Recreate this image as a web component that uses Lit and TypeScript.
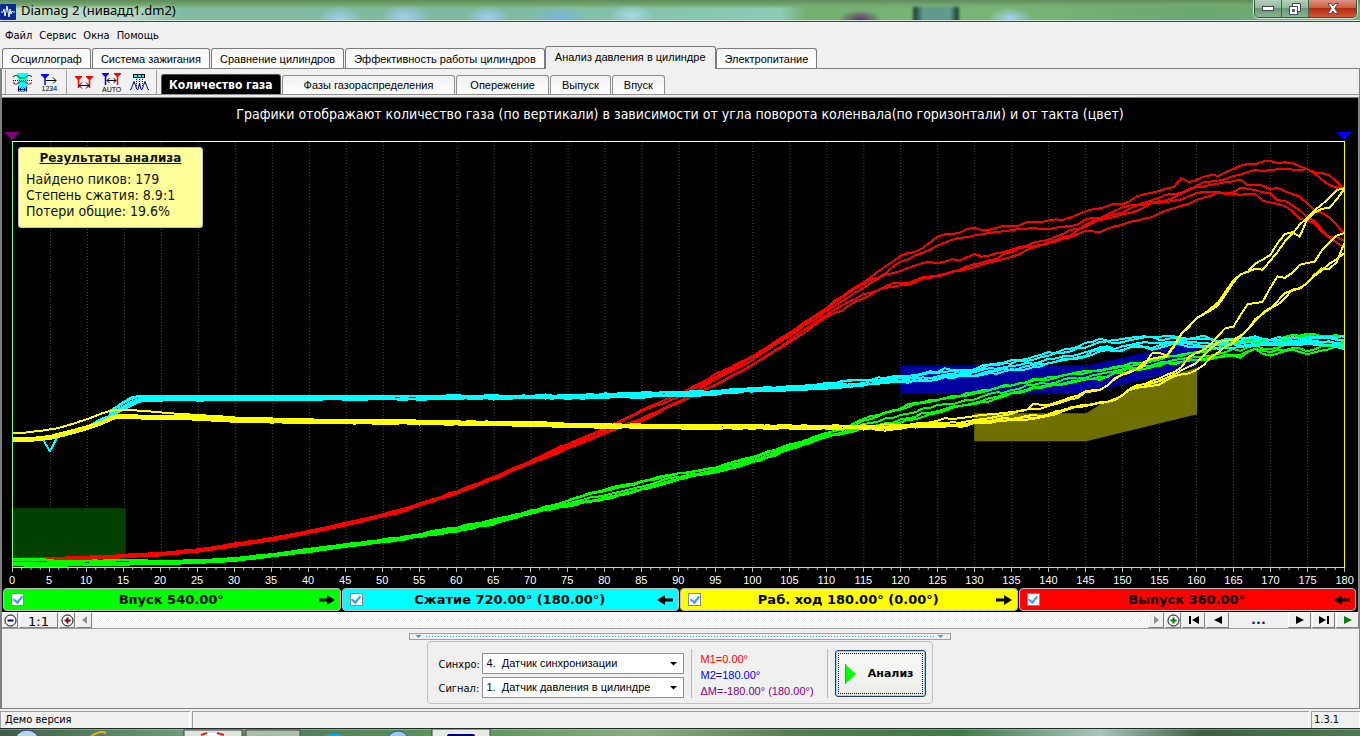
import { LitElement, html, svg, css } from "lit";
import { customElement, state } from "lit/decorators.js";
import { classMap } from "lit/directives/class-map.js";

type Pt = [number, number];

const DEG = 7.4;
const LEFT = 12;

function at(points: Pt[], x: number): number {
  if (x <= points[0][0]) return points[0][1];
  for (let i = 1; i < points.length; i++) {
    const [x1, y1] = points[i];
    if (x <= x1) {
      const [x0, y0] = points[i - 1];
      return y0 + ((y1 - y0) * (x - x0)) / (x1 - x0);
    }
  }
  return points[points.length - 1][1];
}

// Repeatable measurement ripple, so every render draws the same trace.
function ripple(seed: number, i: number): number {
  const v = Math.sin(seed * 91.7 + i * 37.3) * 4375.5;
  return (v - Math.floor(v)) * 2 - 1;
}

function trace(f: (x: number) => number, seed: number, amp: number, from = 0): string {
  const out: string[] = [];
  for (let d = from; d <= 180; d++) {
    const x = LEFT + d * DEG;
    const a = d < 50 ? amp * 0.25 : d < 110 ? amp * 0.6 : amp;
    out.push(`${x.toFixed(1)},${(f(x) + ripple(seed, d) * a).toFixed(1)}`);
  }
  return out.join(" ");
}

const mix = (lo: Pt[], hi: Pt[], t: number) => (x: number) => at(lo, x) * (1 - t) + at(hi, x) * t;

// Constant separation of neighbouring cycles on the calm part of the stroke.
const spread = (p: Pt[], offset: number, until: number) => (x: number) => at(p, x) + (x < until ? offset : 0);

const redBase: Pt[] = [[12, 561], [50, 560], [83, 559], [117, 557.5], [160, 555], [197, 551.5], [233, 546], [272, 540], [308, 533], [345, 525], [382, 516.5], [400, 512], [419, 505.5], [457, 493], [493, 479], [530, 463]];

const red: Pt[][] = [
  [...redBase, [567, 445], [604, 429], [641, 411], [678, 395], [715, 375], [753, 356], [789, 333], [826, 308], [840, 297], [863, 283], [883, 269], [900, 257], [921, 249], [937, 236], [957, 233], [974, 228], [985, 231], [1000, 227], [1005, 225], [1013, 227], [1028, 222], [1042, 223], [1050, 221], [1072, 218], [1085, 211], [1100, 209], [1115, 204], [1123, 205], [1140, 195], [1153, 192], [1173, 188], [1182, 178], [1190, 182], [1207, 175], [1218, 175], [1230, 170], [1240, 166], [1255, 164], [1262, 162], [1280, 162], [1295, 163], [1307, 170], [1318, 176], [1330, 186], [1344, 189]],
  [...redBase, [567, 446], [604, 430], [641, 412], [678, 398], [715, 378], [753, 357], [789, 335], [826, 309], [863, 284], [883, 275], [900, 262], [921, 253], [937, 246], [957, 239], [974, 236], [993, 232], [1023, 229], [1040, 229], [1073, 227], [1083, 221], [1093, 217], [1100, 219], [1113, 211], [1130, 206], [1147, 203], [1160, 197], [1183, 192], [1200, 183], [1233, 177], [1255, 170], [1265, 172], [1283, 168], [1307, 170], [1328, 175], [1344, 188]],
  [...redBase, [567, 447], [604, 433], [641, 419], [678, 402], [715, 380], [753, 360], [789, 336], [826, 312], [863, 289], [883, 275], [900, 271], [915, 265], [930, 262], [937, 264], [952, 259], [960, 262], [974, 254], [982, 258], [1000, 253], [1020, 247], [1050, 240], [1070, 231], [1087, 226], [1100, 219], [1123, 212], [1137, 206], [1157, 203], [1180, 195], [1197, 187], [1213, 185], [1240, 180], [1248, 185], [1263, 185], [1272, 190], [1278, 188], [1292, 195], [1300, 196], [1315, 212], [1322, 212], [1337, 225], [1344, 233]],
  [...redBase, [567, 449], [604, 434], [641, 421], [678, 402], [715, 385], [753, 365], [789, 341], [826, 315], [863, 295], [880, 289], [893, 284], [907, 284], [921, 278], [937, 276], [957, 270], [974, 265], [993, 260], [1020, 248], [1043, 244], [1070, 235], [1090, 222], [1113, 218], [1133, 212], [1153, 203], [1177, 200], [1197, 193], [1218, 191], [1227, 195], [1240, 188], [1253, 190], [1270, 193], [1277, 200], [1287, 200], [1307, 218], [1315, 221], [1330, 238], [1344, 248]],
  [...redBase, [567, 449], [604, 434], [641, 422], [678, 403], [715, 386], [753, 365], [789, 343], [826, 317], [845, 309], [863, 298], [880, 290], [900, 285], [907, 285], [921, 280], [937, 276], [957, 271], [974, 267], [1000, 260], [1007, 259], [1033, 248], [1050, 243], [1070, 237], [1083, 232], [1100, 232], [1123, 225], [1133, 220], [1143, 220], [1160, 213], [1183, 205], [1200, 200], [1218, 193], [1233, 194], [1257, 195], [1263, 202], [1277, 203], [1290, 209], [1302, 220], [1312, 220], [1325, 237], [1337, 238], [1344, 242]],
];

const greenHi: Pt[] = [[12, 560], [40, 560], [60, 562], [120, 561], [167, 562], [200, 561], [233, 559], [272, 555], [308, 550], [345, 545], [382, 541], [419, 535], [457, 528], [493, 521], [530, 512], [567, 501], [604, 490], [641, 482], [678, 474], [715, 468], [753, 457], [789, 446], [826, 434], [850, 427], [863, 420], [880, 415], [900, 408], [921, 402], [937, 399], [957, 397], [974, 392], [993, 389], [1011, 385], [1030, 381], [1043, 380], [1063, 375], [1083, 373], [1103, 370], [1123, 366], [1143, 363], [1163, 358], [1183, 355], [1200, 351], [1213, 350], [1233, 343], [1253, 341], [1273, 341], [1293, 336], [1307, 334], [1320, 337], [1344, 336]];
const greenLo: Pt[] = [[12, 566], [50, 567], [120, 566], [167, 565], [200, 564], [233, 562], [272, 557], [308, 553], [345, 548], [382, 543], [419, 538], [457, 532], [493, 525], [530, 514], [567, 507], [604, 500], [641, 491], [678, 480], [715, 473], [753, 463], [789, 451], [826, 437], [850, 433], [863, 429], [880, 427], [900, 423], [921, 417], [937, 413], [957, 408], [974, 405], [993, 400], [1011, 394], [1043, 387], [1063, 386], [1083, 381], [1103, 379], [1123, 372], [1143, 370], [1163, 365], [1183, 363], [1200, 361], [1213, 358], [1233, 357], [1240, 358], [1253, 349], [1267, 357], [1280, 353], [1293, 351], [1307, 354], [1320, 350], [1344, 347]];

const cyanHi: Pt[] = [[12, 438], [38, 437], [60, 430], [100, 415], [110, 411], [123, 402], [130, 398], [138, 396.5], [250, 396.5], [400, 396.5], [567, 395.5], [678, 392.5], [715, 391.5], [753, 389], [789, 387], [826, 384], [847, 381], [880, 379], [900, 377], [921, 375], [943, 370], [963, 371], [974, 369], [983, 365], [1004, 362], [1030, 359], [1050, 353], [1067, 350], [1083, 345], [1100, 340], [1117, 342], [1137, 337], [1150, 336], [1177, 338], [1187, 339], [1200, 336], [1217, 341], [1250, 337], [1267, 340], [1293, 337], [1307, 338], [1344, 337]];
const cyanLo: Pt[] = [[12, 440], [38, 438], [42, 440], [49, 452], [56, 438], [66, 436], [80, 430], [100, 420], [115, 414], [140, 401.5], [175, 401], [250, 400.5], [400, 400], [567, 399], [641, 398], [678, 396], [715, 395], [753, 392], [789, 391], [826, 389], [847, 387], [880, 384], [900, 383], [921, 382], [943, 379], [974, 376], [1004, 372], [1030, 368], [1050, 364], [1067, 361], [1083, 358], [1100, 351], [1117, 353], [1137, 346], [1150, 350], [1177, 344], [1187, 346], [1200, 347], [1217, 348], [1250, 346], [1267, 345], [1293, 344], [1307, 344], [1344, 348]];

const yellowTop: Pt[] = [[12, 434], [27, 433], [57, 429], [80, 422], [107, 412], [120, 410], [160, 413], [200, 416], [233, 418], [300, 420], [400, 421], [530, 423], [604, 425], [760, 426], [860, 427], [893, 425], [921, 425], [943, 420], [974, 417], [1000, 413], [1027, 411], [1033, 405], [1050, 406], [1072, 397], [1087, 392], [1100, 390], [1117, 378]];
const yellowBot: Pt[] = [[12, 440], [30, 440], [50, 438], [70, 433], [100, 424], [113, 417], [160, 418], [200, 419], [233, 421], [300, 422], [400, 423], [530, 425], [604, 427], [700, 428], [800, 428], [860, 428], [893, 429], [921, 426], [963, 425], [974, 423], [993, 422], [1000, 420], [1027, 418], [1050, 415], [1072, 408], [1087, 406], [1100, 403], [1117, 400], [1133, 388]];

const yellow: Pt[][] = [
  [...yellowTop, [1133, 370], [1143, 368], [1152, 353], [1163, 352], [1168, 357], [1177, 340], [1192, 322], [1200, 317], [1217, 305], [1225, 292], [1235, 277], [1247, 273], [1257, 262], [1267, 259], [1283, 235], [1293, 233], [1300, 237], [1308, 218], [1320, 208], [1330, 208], [1344, 190]],
  [...yellowBot.slice(0, 20), [1050, 408], [1072, 400], [1087, 393], [1100, 390], [1117, 378], [1133, 371], [1148, 361], [1167, 357], [1182, 333], [1197, 318], [1218, 306], [1233, 283], [1242, 272], [1263, 269], [1280, 248], [1303, 221], [1315, 210], [1337, 190], [1344, 188]],
  [...yellowBot, [1163, 378], [1177, 372], [1190, 357], [1203, 351], [1227, 328], [1233, 327], [1248, 304], [1263, 302], [1277, 277], [1287, 277], [1302, 263], [1315, 262], [1323, 248], [1338, 235], [1344, 234]],
  [...yellowBot, [1140, 388], [1163, 380], [1177, 373], [1197, 363], [1217, 343], [1233, 341], [1247, 330], [1257, 317], [1273, 307], [1283, 295], [1302, 288], [1322, 270], [1344, 253]],
  [...yellowBot, [1140, 388], [1155, 387], [1173, 377], [1197, 371], [1220, 350], [1243, 337], [1263, 313], [1283, 302], [1293, 290], [1302, 287], [1323, 268], [1330, 270], [1340, 257], [1344, 243]],
];

const TRACES = [
  ...red.map((p, i) => ({ cls: "red", pts: trace(spread(p, (i - 2) * 0.6, 560), i + 1, 1) })),
  ...[0, 0.12, 0.55, 0.85, 1].map((t, i) => ({ cls: "lime", pts: trace(mix(greenHi, greenLo, t), i + 11, 1.4) })),
  ...[0, 0.2, 0.6, 0.85, 1].map((t, i) => ({ cls: "aqua", pts: trace(mix(cyanHi, cyanLo, t), i + 21, 1.4, i === 4 ? 3 : 13) })),
  { cls: "yellow", pts: trace((x) => at(yellow[0], x), 31, 1) },
  ...yellow.slice(1).map((p, i) => ({ cls: "yellow", pts: trace(spread(p, i - 1.5, 1060), i + 32, 1.2) })),
];

const MAIN_TABS = ["Осциллограф", "Система зажигания", "Сравнение цилиндров", "Эффективность работы цилиндров", "Анализ давления в цилиндре", "Электропитание"];
const SUB_TABS = ["Количество газа", "Фазы газораспределения", "Опережение", "Выпуск", "Впуск"];
const PHASES = [
  { name: "Впуск 540.00°", cls: "p-lime", back: false },
  { name: "Сжатие 720.00° (180.00°)", cls: "p-aqua", back: true },
  { name: "Раб. ход 180.00° (0.00°)", cls: "p-yellow", back: false },
  { name: "Выпуск 360.00°", cls: "p-red", back: true },
];

const icoRange = html`<svg width="20" height="20" viewBox="0 0 20 20">
  <path d="M5 1h11l-1 4v15H6V5z" fill="#0ff"/>
  <path d="M1 5l2-1.500h2L8 6h5l3-2.500h2L20 5" fill="none" stroke="green" stroke-width="1.200"/>
  <path d="M1 8.500h19" stroke="#000" stroke-dasharray="1 1"/>
  <path d="M1 10.500L3 12h2l3-2.500h5L16 12h2l2-1.500" fill="none" stroke="red" stroke-width="1.200"/>
  <path d="M6.500 14.500v5M14.500 14.500v5M7 17.500h7M9.500 15.500l-2 2 2 2M11.500 15.500l2 2-2 2" fill="none" stroke="#000080"/></svg>`;
const icoCount = html`<svg width="20" height="20" viewBox="0 0 20 20">
  <path d="M1 2h8v1L6 6H4L1 3z" fill="#00f"/><path d="M5 5v8" stroke="#00f" stroke-width="1.500"/>
  <path d="M6 8.500h10M13 5.500l3 3-3 3" fill="none" stroke="#000"/>
  <text class="tiny" x="1.500" y="19">1234</text></svg>`;
const icoMarks = html`<svg width="20" height="20" viewBox="0 0 20 20">
  <path d="M1 4h7v1L5.500 7.500h-2L1 5zM12 4h7v1l-2.500 2.500h-2L12 5z" fill="red"/><path d="M4.500 7v9M15.500 7v9" stroke="red" stroke-width="1.500"/>
  <path d="M5 13.500h10M8 10.500l-3 3 3 3M12 10.500l3 3-3 3" fill="none" stroke="#000"/></svg>`;
const icoAuto = html`<svg width="20" height="20" viewBox="0 0 20 20">
  <path d="M0 1h7v1L4.500 4.500h-2L0 2z" fill="#00f"/><path d="M3.500 4v9" stroke="#00f" stroke-width="1.500"/>
  <path d="M12 1h7v1l-2.500 2.500h-2L12 2z" fill="red"/><path d="M15.500 4v9" stroke="red" stroke-width="1.500"/>
  <path d="M5 8.500h9M7.500 6l-2.500 2.500L7.500 11M11.500 6L14 8.500 11.500 11" fill="none" stroke="#000"/>
  <text class="tiny" x="0" y="20">AUTO</text></svg>`;
const icoPeaks = html`<svg width="20" height="20" viewBox="0 0 20 20">
  <path d="M3 2h12v4H3z"/><path d="M4 3h3v2H4zM8 3h3v2H8zM12 3h2v2h-2z" fill="#0ff"/>
  <path d="M6.500 7v7M9.500 7v7M12.500 7v7" stroke="#000" stroke-dasharray="1 1"/>
  <path d="M0 17.500h1l1.500-4 1.500-4 1.500 4 1.500 4h1l1.500-6 1.500 6h1l1.500-4 1.500-4 1.500 4 1.500 4h1" fill="none" stroke="#000080"/></svg>`;
const arrow = (back: boolean) => html`<svg class=${classMap({ arrow: true, back })} width="16" height="10" viewBox="0 0 16 10"><path d="M0 3.500h8V0l8 5-8 5V6.500H0z"/></svg>`;

@customElement("app-root")
export class AppRoot extends LitElement {
  @state() private tab = 4;
  @state() private sub = 0;

  static styles = css`
    :host { display: flex; flex-direction: column; height: 100vh; min-height: 480px; overflow: hidden; background: #f0f0f0; color: #000; font: 11px/16px "Liberation Sans", Arial, sans-serif; }
    * { box-sizing: border-box; }
    button, input, select { font: inherit; color: inherit; margin: 0; padding: 0; border-radius: 0; }
    svg { display: block; flex: none; }
    .tiny { font: 7px "Liberation Sans", Arial, sans-serif; fill: #000; }
    .title { display: flex; height: 22px; flex: none; align-items: flex-start; border-bottom: 1px solid #3b4a48; box-shadow: inset 0 -1px #d5e6dc; padding-right: 3px;
      background:
        linear-gradient(#0003, transparent 6px),
        radial-gradient(ellipse 22px 14px at 340px 20px, #9fcdf0, transparent),
        radial-gradient(ellipse 24px 14px at 405px 18px, #9fcdf0, transparent),
        radial-gradient(ellipse 22px 12px at 488px 18px, #9fcdf0, transparent),
        radial-gradient(ellipse 28px 10px at 560px 18px, #74b4e0, transparent),
        radial-gradient(ellipse 22px 12px at 632px 16px, #a8d8e4, transparent),
        radial-gradient(ellipse 22px 10px at 860px 20px, #5d2f6c, transparent),
        linear-gradient(#76ae72 5px, transparent 9px),
        linear-gradient(90deg, transparent 911px, #28463c 915px, #5f9a8c 923px, #5f9a8c 950px, #28463c 957px, transparent 961px),
        radial-gradient(ellipse 22px 10px at 1010px 18px, #a4d0f4, transparent),
        linear-gradient(90deg, #c3dccb 0, #b9d8c6 130px, #82bba0 180px, #7fb9a4 500px, #8accb8 780px, #76ae72 805px, #7ab577 1010px, #68a672 1200px, #7ab078); }
    .title h1 { flex: 1; margin: 2px 0 0 5px; font: 13px/17px "Noto Sans", "Open Sans", sans-serif; }
    .title .logo { margin-top: 4px; }
    .caps { display: flex; height: 18px; border: 1px solid #355240; border-top: 0; border-radius: 0 0 5px 5px; box-shadow: 0 0 0 1px #cfe5d3; overflow: hidden; }
    .caps button { width: 27px; border: 0; border-right: 1px solid #456353; background: linear-gradient(#b4d2b8, #8fb998 45%, #6a9a77 50%, #86b48e); display: grid; place-items: center; }
    .caps .close { width: 47px; border: 0; background: linear-gradient(#dd9685, #cf5c43 45%, #b52b10 50%, #d2573a); }
    .menu { display: flex; gap: 7px; padding: 4px 5px 0; height: 24px; flex: none; font: 11px/16px "DejaVu Sans Condensed", "DejaVu Sans", sans-serif; }
    .menu button { border: 0; background: none; }
    .tabs { display: flex; gap: 1px; align-items: flex-end; padding-left: 2px; flex: none; height: 22px; }
    .tabs button { height: 20px; padding: 0 8px; white-space: nowrap; border: 1px solid #7a7a7a; border-bottom: 0; border-radius: 3px 3px 0 0; background: linear-gradient(#f4f4f4, #fff); }
    .tabs .on { height: 23px; margin: 0 -1px -1px; padding: 0 9px 2px; background: #f0f0f0; position: relative; }
    .page { display: flex; flex-direction: column; flex: 1; min-height: 0; border: solid #808080; border-width: 1px 1px 1px 2px; }
    .tools { display: flex; height: 26px; flex: none; align-items: center; border-bottom: 1px solid #909090; padding-left: 3px; }
    .tools .icon { border: 0; background: none; width: 20px; height: 20px; margin-right: 8px; }
    .sep { width: 1px; height: 24px; background: #a0a0a0; flex: none; }
    .sep.first { margin-right: 6px; }
    .sep.mid { margin: 0 7px 0 -2px; }
    .sep.end { margin-right: 4px; margin-left: -2px; }
    .subtabs { display: flex; align-self: flex-end; gap: 1px; align-items: flex-end; }
    .subtabs button { height: 19px; padding: 0 13px; line-height: 18px; white-space: nowrap; border: 1px solid #8e8e8e; border-bottom: 0; border-radius: 3px 3px 0 0; background: linear-gradient(#f0f0f0, #fff); }
    .subtabs .wide { padding: 0 21px; }
    .subtabs .slim { padding: 0 11px; }
    .subtabs .on { height: 20px; padding: 0 7px; background: #000; color: #fff; border-color: #555; font: bold 12px/18px "DejaVu Sans Condensed", "DejaVu Sans", sans-serif; }
    .scope { display: flex; flex-direction: column; flex: 1; min-height: 0; margin-top: 2px; border-top: 1px solid #808080; border-right: 1px solid #909090; background: #000; color: #fff; position: relative; }
    .caption { margin: 0; padding: 8px 0 16px; text-align: center; font: 14px/17px "DejaVu Sans Condensed", "DejaVu Sans", sans-serif; }
    .marks { display: flex; justify-content: space-between; margin: -7px 6px 0 2px; flex: none; height: 9px; }
    .marks i { width: 16px; height: 8px; clip-path: polygon(0 0, 100% 0, 50% 100%); background: #800080; }
    .marks .m2 { background: #00f; }
    .plot { flex: 1; min-height: 0; margin: 0 13px 0 10px; border: 1px solid #fff; border-left-color: #80ff80; border-right-color: #ff0; border-bottom-color: #d0d0d0; display: flex; }
    .plot svg { flex: 1; width: 100%; height: 100%; min-width: 0; }
    .plot polyline { fill: none; stroke-width: 2; vector-effect: non-scaling-stroke; shape-rendering: crispEdges; }
    .red { stroke: #f00; } .lime { stroke: #0f0; } .aqua { stroke: #0ff; } .yellow { stroke: #ff0; }
    .grid { stroke: #4a4a4a; stroke-dasharray: 1 2; vector-effect: non-scaling-stroke; shape-rendering: crispEdges; }
    .ticks { height: 4px; margin: 0 13px 0 10px; }
    .ticks svg { width: 100%; height: 4px; }
    .scale { display: flex; justify-content: space-between; margin: 1px 13px 0 10px; height: 14px; flex: none; line-height: 15px; }
    .scale span { width: 0; display: flex; justify-content: center; }
    .note { position: absolute; left: 16px; top: 49px; width: 185px; height: 81px; padding: 2px 7px; border: 1px solid #c0c0c0; border-radius: 3px; background: #ffff99; color: #111; font: 14px/16px "DejaVu Sans Condensed", "DejaVu Sans", sans-serif; white-space: nowrap; }
    .note h2 { margin: 0 0 4px; text-align: center; font: bold 12px/17px "DejaVu Sans", sans-serif; text-decoration: underline; }
    .note p { margin: 0; }
    .phases { display: flex; gap: 1px; flex: none; height: 25px; padding: 1px 2px 1px 1px; }
    .phase { flex: 1; display: flex; align-items: center; padding: 0 5px 0 7px; border: 1px solid #c0c0c0; border-radius: 4px; color: #000; font: bold 13px/16px "DejaVu Sans", sans-serif; }
    .phase label { flex: 1; display: flex; align-items: center; }
    .phase span { flex: 1; text-align: center; white-space: nowrap; }
    .phase input { appearance: none; width: 13px; height: 13px; border: 1px solid #8a8a8a; background: #fff; display: grid; place-items: center; }
    .phase input:checked::before { content: ""; width: 4px; height: 7px; margin-top: -2px; border: solid #3399ff; border-width: 0 2px 2px 0; transform: rotate(40deg); }
    .p-lime { background: #0f0; } .p-aqua { background: #0ff; } .p-yellow { background: #ff0; } .p-red { background: #f00; }
    .back { transform: scaleX(-1); }
    .nav { display: flex; height: 17px; flex: none; border-bottom: 1px solid #a0a0a0; gap: 1px; background: #f0f0f0; }
    .nav button { width: 23px; border: 1px solid; border-color: #fff #808080 #808080 #fff; background: #f0f0f0; display: grid; place-items: center; flex: none; }
    .nav .sq { width: 16px; }
    .nav .one { width: 39px; padding-top: 2px; font: 13px/14px "DejaVu Sans", sans-serif; }
    .nav .dots { width: 57px; border-color: #f0f0f0; color: #124; font: bold 13px/14px "DejaVu Sans", sans-serif; }
    .nav .track { flex: 1; background: repeating-conic-gradient(#f0f0f0 0 25%, #fff 0 50%) 0 0 / 2px 2px; }
    .dock { height: 79px; flex: none; display: flex; flex-direction: column; align-items: center; padding: 4px 2px 0 0; }
    .split { width: 542px; height: 7px; border: 1px solid #a0a0a0; padding: 0 6px; display: flex; align-items: center; gap: 4px; }
    .split i { width: 6px; height: 3px; background: #39f; clip-path: polygon(0 0, 100% 0, 50% 100%); }
    .split b { flex: 1; height: 1px; background: repeating-linear-gradient(90deg, #39f 0 1px, transparent 1px 3px); }
    .box { display: flex; align-items: center; width: 506px; height: 63px; margin-top: 1px; border: 1px solid #c0c0c0; border-radius: 4px; padding: 2px 5px 0 11px; }
    .fields { display: grid; grid-template-columns: 43px 202px; row-gap: 3px; padding-top: 3px; }
    .fields label { padding-top: 4px; font: 11px/16px "DejaVu Sans Condensed", sans-serif; white-space: nowrap; }
    .pick { position: relative; display: flex; }
    .pick select { appearance: none; width: 100%; height: 21px; padding: 0 4px; border: 1px solid #909090; background: #fff; }
    .pick i { position: absolute; right: 6px; top: 9px; width: 8px; height: 4px; background: #000; clip-path: polygon(0 0, 100% 0, 50% 100%); pointer-events: none; }
    .box .bar { width: 1px; height: 49px; margin: 0 0 0 7px; background: #b8b8b8; }
    .vals { width: 128px; padding: 2px 0 0 9px; white-space: nowrap; }
    .vals p { margin: 0; }
    .v1 { color: #f00; } .v2 { color: #00f; } .v3 { color: #800080; }
    .go { margin-left: 7px; width: 91px; height: 47px; border: 1px solid #1c3f66; border-radius: 3px; background: linear-gradient(#fafafa, #ecece6); box-shadow: inset 0 0 0 1px #9ed3f5; display: flex; align-items: center; justify-content: space-between; padding: 0 11px 0 9px; outline: 1px dotted #000; outline-offset: -4px; font: bold 11px/16px "DejaVu Sans", sans-serif; }
    .status { display: flex; gap: 2px; flex: none; height: 19px; padding-top: 2px; font: 11px/16px "DejaVu Sans Condensed", sans-serif; }
    .status div { border: solid #a0a0a0; border-width: 1px 0 0 1px; box-shadow: inset -1px 0 #fff; padding-left: 4px; }
    .status .s1 { width: 190px; } .status .s2 { flex: 1; } .status .s3 { width: 49px; padding-left: 2px; }
    .task { display: flex; align-items: flex-start; flex: none; height: 8px; border-top: 1px solid #1e2d24; overflow: hidden; background: linear-gradient(#cfe0d266 1px, transparent 1px), linear-gradient(90deg, #3f5d4b, #6d9a75 180px, #54805c 300px, #5d9660 480px, #8cab84 640px, #547a50 800px, #3e7a48 960px, #a9c4bd 1100px, #3f6042 1200px, #4c7a50); }
  `;

  private plot() {
    const grid = Array.from({ length: 35 }, (_, i) => LEFT + (i + 1) * 37 + 0.5);
    return html`<div class="plot"><svg viewBox="12 142 1332 426" preserveAspectRatio="none" role="img" aria-label="Количество газа">
      ${grid.map((x) => svg`<line class="grid" x1=${x} x2=${x} y1="142" y2="568"></line>`)}
      <rect x="12" y="509" width="113" height="59" fill="#004000"></rect>
      <polygon points="900,366 1086,366 1197,342 1197,367 1086,394 900,394" fill="#0000a0"></polygon>
      <polygon points="974,414 1086,414 1103,403 1160,380 1197,368 1197,415 1086,442 974,442" fill="#707000"></polygon>
      ${TRACES.map((t) => svg`<polyline class=${t.cls} points=${t.pts}></polyline>`)}
    </svg></div>`;
  }

  render() {
    const ticks = Array.from({ length: 145 }, (_, i) => svg`<path d=${`M${(i * 9.25 + 0.5).toFixed(2)} 0v${i % 4 ? 2 : 4}`} stroke="#c0c0c0"></path>`);
    return html`
      <header class="title">
        <svg class="logo" width="16" height="16" viewBox="0 0 16 16"><rect width="16" height="16" rx="1" fill="#0a2a9a"/><path d="M1 8h2l1-3 1 7 2-10 2 11 1-8 1 5 1-3 1 1h2" fill="none" stroke="#fff"/></svg>
        <h1>Diamag 2 (нивадд1.dm2)</h1>
        <div class="caps">
          <button aria-label="Свернуть"><svg width="12" height="5"><rect x=".5" y=".5" width="11" height="4" fill="#fff" stroke="#445"/></svg></button>
          <button aria-label="Развернуть"><svg width="12" height="12" fill="#fff" stroke="#445"><path d="M3.500.5h8v8h-8z"/><path d="M.5 3.500h8v8h-8z"/><path d="M3.500 6.500h2v2h-2z" fill="#7a9a84"/></svg></button>
          <button class="close" aria-label="Закрыть"><svg width="12" height="11" viewBox="0 0 12 11"><path d="M1 .5h3l2 2.500 2-2.500h3L7.800 5.500 11 10.500H8L6 8l-2 2.500H1l3.200-5z" fill="#fff" stroke="#545"/></svg></button>
        </div>
      </header>
      <nav class="menu"><button>Файл</button><button>Сервис</button><button>Окна</button><button>Помощь</button></nav>
      <div class="tabs" role="tablist">
        ${MAIN_TABS.map((t, i) => html`<button role="tab" class=${classMap({ on: i === this.tab })} @click=${() => (this.tab = i)}>${t}</button>`)}
      </div>
      <main class="page">
        <div class="tools">
          <i class="sep first"></i>
          <button class="icon" aria-label="Диапазон">${icoRange}</button><button class="icon" aria-label="Счёт">${icoCount}</button>
          <i class="sep mid"></i>
          <button class="icon" aria-label="Маркеры">${icoMarks}</button><button class="icon" aria-label="Авто">${icoAuto}</button><button class="icon" aria-label="Пики">${icoPeaks}</button>
          <i class="sep end"></i>
          <div class="subtabs" role="tablist">
            ${SUB_TABS.map((t, i) => html`<button role="tab" class=${classMap({ on: i === this.sub, wide: i === 1, slim: i > 2 })} @click=${() => (this.sub = i)}>${t}</button>`)}
          </div>
        </div>
        <section class="scope">
          <p class="caption">Графики отображают количество газа (по вертикали) в зависимости от угла поворота коленвала(по горизонтали) и от такта (цвет)</p>
          <div class="marks"><i></i><i class="m2"></i></div>
          ${this.plot()}
          <div class="ticks"><svg viewBox="0 0 1333 4" preserveAspectRatio="none">${ticks}</svg></div>
          <div class="scale">${Array.from({ length: 37 }, (_, i) => html`<span>${i * 5}</span>`)}</div>
          <aside class="note"><h2>Результаты анализа</h2><p>Найдено пиков: 179</p><p>Степень сжатия: 8.9:1</p><p>Потери общие: 19.6%</p></aside>
          <div class="phases">
            ${PHASES.map((p) => html`<div class="phase ${p.cls}"><label><input type="checkbox" checked /><span>${p.name}</span></label>${arrow(p.back)}</div>`)}
          </div>
        </section>
        <div class="nav">
          <button class="sq" aria-label="Уменьшить"><svg width="13" height="13"><circle cx="6.500" cy="6.500" r="5.500" fill="#fff" stroke="#000"/><path d="M3.500 6.500h6" stroke="#000080" stroke-width="2"/></svg></button>
          <button class="one">1:1</button>
          <button class="sq" aria-label="Увеличить"><svg width="13" height="13"><circle cx="6.500" cy="6.500" r="5.500" fill="#fff" stroke="#000"/><path d="M3.500 6.500h6M6.500 3.500v6" stroke="#800000" stroke-width="2"/></svg></button>
          <button class="sq" aria-label="Влево"><svg width="5" height="8"><path d="M5 0v8L0 4z" fill="#909090"/></svg></button>
          <div class="track"></div>
          <button class="sq" aria-label="Вправо"><svg width="5" height="8"><path d="M0 0v8l5-4z" fill="#909090"/></svg></button>
          <button class="sq" aria-label="Добавить"><svg width="13" height="13"><circle cx="6.500" cy="6.500" r="5.500" fill="#fff" stroke="#000"/><path d="M3.500 6.500h6M6.500 3.500v6" stroke="#008000" stroke-width="2"/></svg></button>
          <button aria-label="В начало"><svg width="10" height="8"><path d="M0 0h2v8H0zM10 0v8L3 4z"/></svg></button>
          <button aria-label="Назад"><svg width="8" height="8"><path d="M8 0v8L0 4z"/></svg></button>
          <button class="dots">...</button>
          <button aria-label="Вперёд"><svg width="8" height="8"><path d="M0 0v8l8-4z"/></svg></button>
          <button aria-label="В конец"><svg width="10" height="8"><path d="M8 0h2v8H8zM0 0v8l7-4z"/></svg></button>
          <button aria-label="Пуск"><svg width="8" height="8"><path d="M0 0v8l8-4z" fill="#008000"/></svg></button>
        </div>
        <div class="dock">
          <div class="split"><i></i><b></b><i></i></div>
          <div class="box">
            <div class="fields">
              <label for="sync">Синхро:</label><div class="pick"><select id="sync"><option>4.&nbsp; Датчик синхронизации</option></select><i></i></div>
              <label for="signal">Сигнал:</label><div class="pick"><select id="signal"><option>1.&nbsp; Датчик давления в цилиндре</option></select><i></i></div>
            </div>
            <i class="bar"></i>
            <div class="vals"><p class="v1">M1=0.00°</p><p class="v2">M2=180.00°</p><p class="v3">ΔM=-180.00° (180.00°)</p></div>
            <i class="bar"></i>
            <button class="go"><svg width="11" height="20"><path d="M0 0v20l11-10z" fill="#0f0"/><path d="M.5 0v20" stroke="#777"/></svg><span>Анализ</span></button>
          </div>
        </div>
      </main>
      <footer class="status"><div class="s1">Демо версия</div><div class="s2"></div><div class="s3">1.3.1</div></footer>
      <div class="task" aria-hidden="true">
        <svg width="510" height="8" viewBox="0 0 510 8">
          <circle cx="27" cy="14" r="13" fill="#b8d4e8" stroke="#345"/><path d="M90 8q10-7 16-4" fill="none" stroke="#d8b62c" stroke-width="2"/>
          <rect x="184" y="1" width="58" height="9" fill="#dfe5dd" stroke="#445"/><ellipse cx="212" cy="8" rx="11" ry="4" fill="#fff"/><path d="M201 6l6-2M217 4l7 2" stroke="#d22" stroke-width="2"/>
          <rect x="246" y="1" width="54" height="9" fill="#aac0aa" stroke="#445"/><path d="M258 6h16v3h-16z" fill="#c8a878"/>
          <ellipse cx="334" cy="9" rx="11" ry="4" fill="#00aff0"/><circle cx="398" cy="13" r="11" fill="#9cc8f0" stroke="#25a"/>
          <rect x="432" y="0" width="58" height="9" fill="#e6ebe4" stroke="#445"/><rect x="447" y="5" width="28" height="4" rx="2" fill="#000080"/>
        </svg>
      </div>`;
  }
}
